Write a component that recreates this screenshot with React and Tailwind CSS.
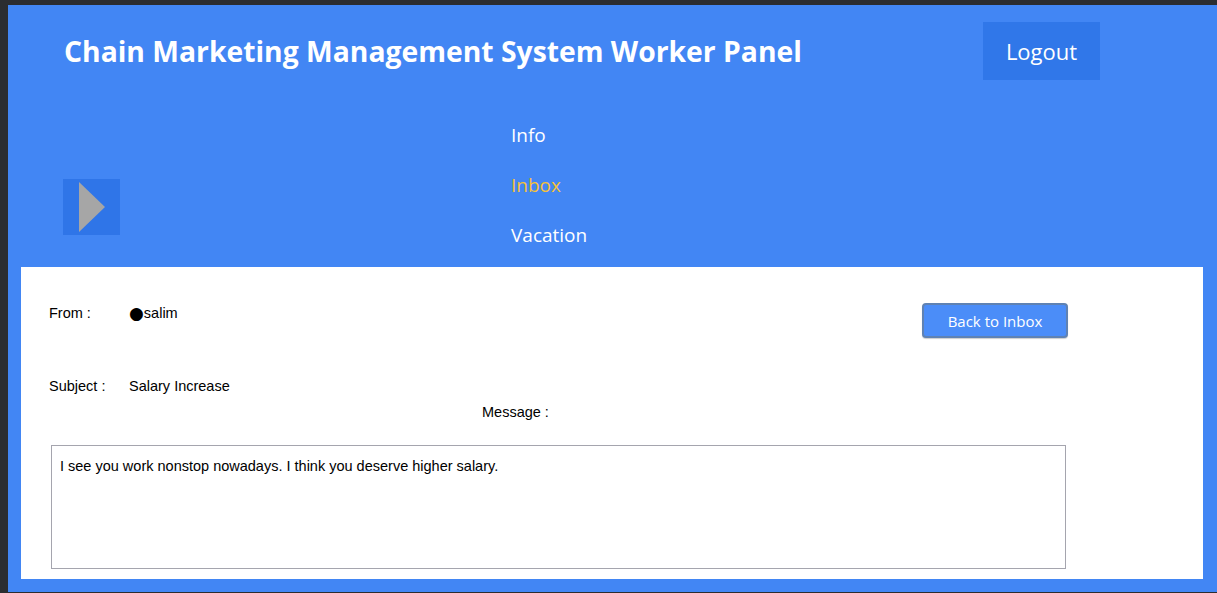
import React from 'react';

const navItems = [
  { name: 'Info', active: false },
  { name: 'Inbox', active: true },
  { name: 'Vacation', active: false },
];

const App = () => {
  return (
    <div className="w-[1217px] h-[593px] bg-[#2b2d30] pt-[5px] pl-[8px] pb-[1px] overflow-hidden">
      <div className="h-full bg-[#4286f4] flex flex-col font-['Open_Sans',sans-serif]">
        {/* Header */}
        <div className="flex items-center justify-between pt-[17px] pl-[56px] pr-[117px]">
          <h1 className="text-[28.3px] font-bold text-white">
            Chain Marketing Management System Worker Panel
          </h1>
          <button className="w-[117px] h-[58px] bg-[#3077e9] text-white text-[22px]">
            Logout
          </button>
        </div>

        {/* Toggle + navigation */}
        <div className="flex pt-[30px] pb-[7px] pl-[55px]">
          <button className="mt-[69px] w-[57px] h-[56px] bg-[#2f75e8] flex items-center pl-[16px]">
            <svg width="26" height="50" viewBox="0 0 26 50">
              <polygon points="0,0 26,25 0,50" fill="#a6a6a6" />
            </svg>
          </button>
          <nav className="ml-[391px] flex flex-col">
            {navItems.map((item) => (
              <div
                key={item.name}
                className={`h-[50px] flex items-center text-[19px] ${
                  item.active ? 'text-[#f4c13a]' : 'text-white'
                }`}
              >
                {item.name}
              </div>
            ))}
          </nav>
        </div>

        {/* Message panel */}
        <div className="flex-1 mx-[13px] mb-[13px] mr-[14px] bg-white flex flex-col px-[28px] pt-[36px] font-['Liberation_Sans',Arial,sans-serif] text-[14.5px] leading-[16px] text-black">
          <div className="flex items-start">
            <span className="mt-[2px] w-[80px]">From :</span>
            <span className="mt-[2px] flex items-center">
              <span className="font-['DejaVu_Sans',sans-serif] text-[17px] leading-[16px] -mt-[1px]">●</span>salim
            </span>
            <button className="ml-auto mr-[107px] w-[146px] h-[35px] rounded-[4px] border-2 border-[#5f82b3] bg-[#4b8df8] text-white text-[15px] font-['Open_Sans',sans-serif] shadow-[0_1px_1px_rgba(0,0,0,0.2)]">
              Back to Inbox
            </button>
          </div>
          <div className="flex mt-[40px]">
            <span className="w-[80px]">Subject :</span>
            <span>Salary Increase</span>
          </div>
          <div className="mt-[10px] pl-[433px]">Message :</div>
          <div className="mt-[25px] ml-[2px] w-[1015px] h-[124px] border border-[#a5a5ae] px-[8px] pt-[12px]">
            I see you work nonstop nowadays. I think you deserve higher salary.
          </div>
        </div>
      </div>
    </div>
  );
};

export default App;
